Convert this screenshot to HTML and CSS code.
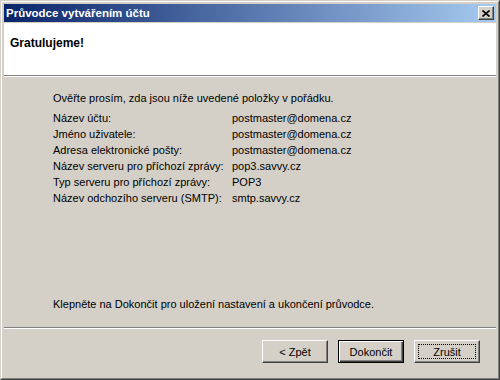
FILE: index.html
```html
<!DOCTYPE html>
<html lang="cs">
<head>
    <meta charset="UTF-8">
    <title>Průvodce vytvářením účtu</title>
    <link rel="stylesheet" href="styles.css">
</head>
<body>
    <div class="window">
        <div class="frame">
            <div class="titlebar">
                <span class="title">Průvodce vytvářením účtu</span>
                <button class="close-btn">
                    <svg width="8" height="7" viewBox="0 0 8 7">
                        <path d="M0.5 0.5 L7.5 6.5 M7.5 0.5 L0.5 6.5" stroke="#000" stroke-width="1.6" fill="none"/>
                    </svg>
                </button>
            </div>
            <div class="header">
                <h1>Gratulujeme!</h1>
            </div>
            <div class="rule"></div>
            <main class="content">
                <p class="intro">Ověřte prosím, zda jsou níže uvedené položky v pořádku.</p>
                <div class="summary">
                    <span>Název účtu:</span><span>postmaster@domena.cz</span>
                    <span>Jméno uživatele:</span><span>postmaster@domena.cz</span>
                    <span>Adresa elektronické pošty:</span><span>postmaster@domena.cz</span>
                    <span>Název serveru pro příchozí zprávy:</span><span>pop3.savvy.cz</span>
                    <span>Typ serveru pro příchozí zprávy:</span><span>POP3</span>
                    <span>Název odchozího serveru (SMTP):</span><span>smtp.savvy.cz</span>
                </div>
                <p class="finish">Klepněte na Dokončit pro uložení nastavení a ukončení průvodce.</p>
            </main>
            <div class="rule"></div>
            <div class="buttons">
                <button class="btn">&lt; Zpět</button>
                <button class="btn default">Dokončit</button>
                <button class="btn focus"><span>Zrušit</span></button>
            </div>
        </div>
    </div>
</body>
</html>
```

FILE: styles.css
```css
* {
    margin: 0;
    padding: 0;
    box-sizing: border-box;
}
body {
    font-family: 'Liberation Sans', Arial, sans-serif;
    font-size: 11px;
    color: #000;
    background: #d4d0c8;
}
.window {
    width: 500px;
    height: 380px;
    border: 1px solid;
    border-color: #d4d0c8 #404040 #404040 #d4d0c8;
}
.frame {
    height: 100%;
    display: flex;
    flex-direction: column;
    border: 1px solid;
    border-color: #fff #808080 #808080 #fff;
    padding: 2px;
    background: #d4d0c8;
}
.titlebar {
    height: 18px;
    margin-bottom: 1px;
    display: flex;
    align-items: center;
    justify-content: space-between;
    padding: 0 2px 0 2px;
    background: linear-gradient(to right, #0a246a, #a6caf0);
}
.title {
    color: #fff;
    font-weight: bold;
    font-size: 11.5px;
}
.close-btn {
    width: 16px;
    height: 14px;
    display: flex;
    align-items: center;
    justify-content: center;
    background: #d4d0c8;
    border: 1px solid;
    border-color: #fff #404040 #404040 #fff;
    box-shadow: inset -1px -1px #808080;
}
.header {
    height: 52px;
    background: #fff;
    padding: 13px 0 0 6px;
}
.header h1 {
    font-size: 12px;
    font-weight: bold;
}
.rule {
    height: 2px;
    border-top: 1px solid #808080;
    border-bottom: 1px solid #fff;
}
.content {
    flex: 1;
    display: flex;
    flex-direction: column;
    padding: 13px 0 0 49px;
}
.intro {
    line-height: 16px;
}
.summary {
    display: grid;
    grid-template-columns: 179px auto;
    margin-top: 4px;
    line-height: 16px;
}
.finish {
    margin-top: auto;
    margin-bottom: 15px;
    line-height: 16px;
}
.buttons {
    height: 47px;
    display: flex;
    justify-content: flex-end;
    align-items: flex-start;
    gap: 10px;
    padding: 11px 16px 0 0;
}
.btn {
    width: 66px;
    height: 23px;
    font-family: inherit;
    font-size: 11px;
    color: #000;
    background: #d4d0c8;
    border: 1px solid;
    border-color: #fff #404040 #404040 #fff;
    box-shadow: inset -1px -1px #808080;
}
.btn.default {
    border: 1px solid #000;
    box-shadow: inset 1px 1px #fff, inset -1px -1px #404040, inset -2px -2px #808080;
}
.btn.focus {
    padding: 3px;
}
.btn.focus span {
    display: flex;
    align-items: center;
    justify-content: center;
    height: 100%;
    border: 1px dotted #000;
}
```
